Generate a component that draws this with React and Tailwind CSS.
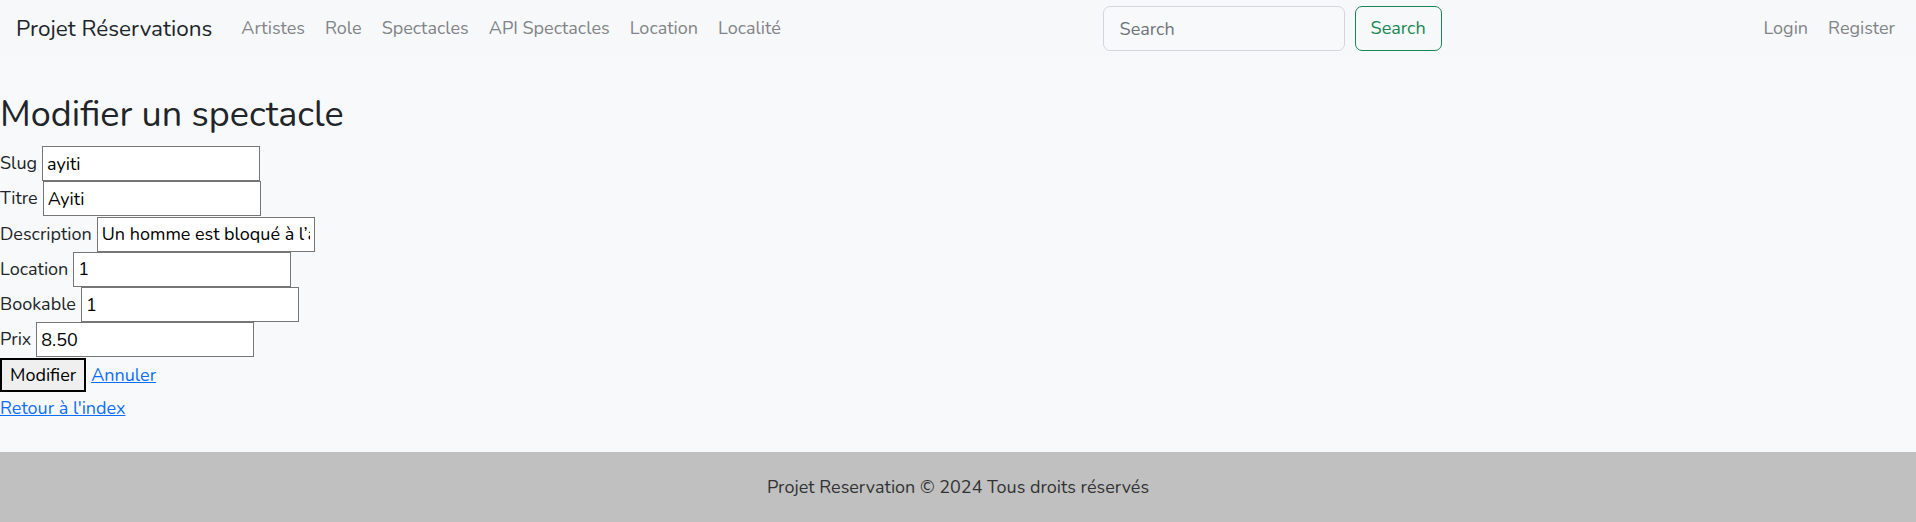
import { useState } from "react";

const links = ["Artistes", "Role", "Spectacles", "API Spectacles", "Location", "Localité"];

function Field({ label, value, width = "w-[218px]" }) {
  const [val, setVal] = useState(value);
  return (
    <div className="flex items-center h-[35.2px] gap-[5px]">
      <label className="text-[18px]">{label}</label>
      <input
        className={`${width} h-[35px] border border-[#767676] bg-white px-1 text-[18px] text-black outline-none`}
        value={val}
        onChange={(e) => setVal(e.target.value)}
      />
    </div>
  );
}

export default function App() {
  return (
    <div className="min-h-screen flex flex-col bg-[#f8f9fa] text-[#212529] font-['Nunito','Lato',sans-serif]">
      {/* NAVBAR */}
      <nav className="h-[57px] flex items-center pl-4 pr-[11px] bg-[#f7f8f9]">
        <a href="#" className="text-[22.5px] mr-[19px] text-[#212529]">
          Projet Réservations
        </a>
        <ul className="flex items-center">
          {links.map((l) => (
            <li key={l}>
              <a href="#" className="px-[10px] text-[18px] text-[#818488]">
                {l}
              </a>
            </li>
          ))}
        </ul>

        <form className="ml-auto flex items-center gap-[10px]" onSubmit={(e) => e.preventDefault()}>
          <input
            placeholder="Search"
            className="w-[242px] h-[45px] rounded-[7px] border border-[#d3d7db] bg-[#f8f9fa] px-4 text-[18px] placeholder:text-[#6c757d] outline-none"
          />
          <button className="w-[87px] h-[45px] rounded-[7px] border border-[#198754] text-[#198754] text-[18px]">
            Search
          </button>
        </form>

        <ul className="ml-auto flex items-center">
          <li>
            <a href="#" className="px-[10px] text-[18px] text-[#818488]">Login</a>
          </li>
          <li>
            <a href="#" className="px-[10px] text-[18px] text-[#818488]">Register</a>
          </li>
        </ul>
      </nav>

      {/* CONTENT */}
      <main className="pt-[36px]">
        <h1 className="text-[36px] leading-[1.2] mb-[10px]">Modifier un spectacle</h1>
        <form onSubmit={(e) => e.preventDefault()}>
          <Field label="Slug" value="ayiti" />
          <Field label="Titre" value="Ayiti" />
          <Field label="Description" value="Un homme est bloqué à l’aéroport de Port-au-Prince" />
          <Field label="Location" value="1" />
          <Field label="Bookable" value="1" />
          <Field label="Prix" value="8.50" />
          <div className="flex items-center h-[34px] gap-[5px] mt-[1px]">
            <button className="h-[34px] px-[8px] bg-[#efefef] border-2 border-black text-[18px] text-black">
              Modifier
            </button>
            <a href="#" className="text-[18px] text-[#0d6efd] underline">Annuler</a>
          </div>
        </form>
        <a href="#" className="block w-fit mt-[2px] text-[18px] leading-[28px] text-[#0d6efd] underline">
          Retour à l'index
        </a>
      </main>

      {/* FOOTER */}
      <footer className="mt-auto h-[70px] flex items-center justify-center bg-[#c0c0c0] text-[18px] text-[#333]">
        Projet Reservation © 2024 Tous droits réservés
      </footer>
    </div>
  );
}
